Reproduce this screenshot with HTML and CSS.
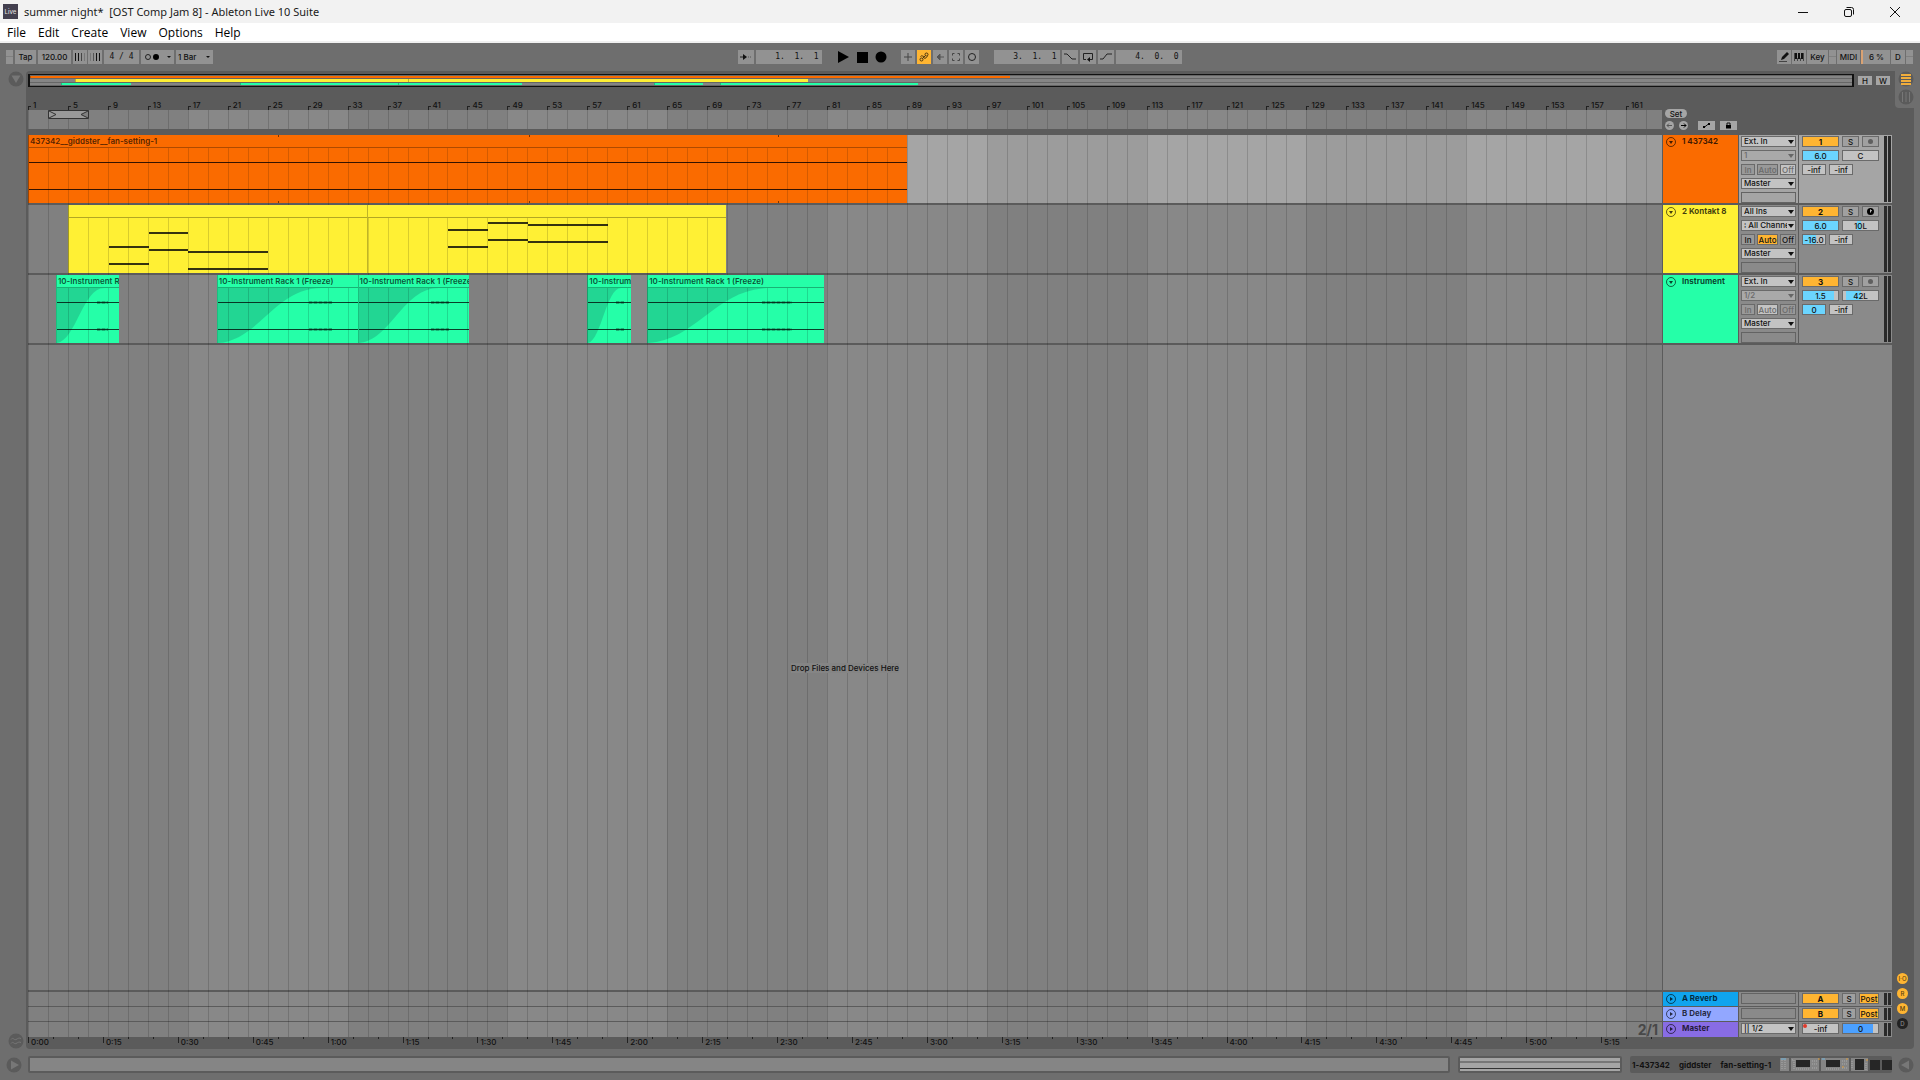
FILE: index.html
```html
<!DOCTYPE html>
<html lang="en">
<head>
    <meta charset="utf-8">
    <meta name="viewport" content="width=device-width, initial-scale=1.0">
    <title>summer night* [OST Comp Jam 8] - Ableton Live 10 Suite</title>
    <link rel="stylesheet" href="styles.css">
</head>
<body>
    <header class="titlebar">
        <span class="app-icon">Live</span>
        <h1 class="app-title">summer night*  [OST Comp Jam 8] - Ableton Live 10 Suite</h1>
        <div class="window-buttons">
            <button aria-label="Minimize"><svg width="12" height="12" viewBox="0 0 12 12"><path d="M1 6.5h10"/></svg></button>
            <button aria-label="Restore"><svg width="12" height="12" viewBox="0 0 12 12"><rect x="1.5" y="3.5" width="7" height="7" rx="1.5"/><path d="M3.5 1.5h5a2 2 0 0 1 2 2v5"/></svg></button>
            <button aria-label="Close"><svg width="12" height="12" viewBox="0 0 12 12"><path d="M1 1l10 10M11 1L1 11"/></svg></button>
        </div>
    </header>
    <nav class="menubar">
        <a href="#">File</a>
        <a href="#">Edit</a>
        <a href="#">Create</a>
        <a href="#">View</a>
        <a href="#">Options</a>
        <a href="#">Help</a>
    </nav>

    <div class="toolbar">
        <div class="tools">
            <button class="tool grip" aria-label="Show link"></button>
            <button class="tool w21">Tap</button>
            <button class="tool w33">120.00</button>
            <div class="tool-pair">
                <button class="tool w14" aria-label="Nudge down"><svg width="10" height="8" viewBox="0 0 10 8"><path d="M.5 0v8M3.5 0v8" stroke="#111"/><path d="M6.5 0v8" stroke="#444"/><path d="M9.5 0v8" stroke="#777"/></svg></button>
                <button class="tool w14" aria-label="Nudge up"><svg width="10" height="8" viewBox="0 0 10 8"><path d="M.5 0v8" stroke="#777"/><path d="M3.5 0v8" stroke="#555"/><path d="M6.5 0v8M9.5 0v8" stroke="#111"/></svg></button>
            </div>
            <button class="tool w35 mono">4 / 4</button>
            <button class="tool w33" aria-label="Metronome"><svg width="28" height="8" viewBox="0 0 28 8"><circle cx="4" cy="4" r="2.5" fill="none" stroke="#222"/><circle cx="12" cy="4" r="3" fill="#000"/><path d="M23 3h4l-2 2z" fill="#111"/></svg></button>
            <div class="pick quant"><select aria-label="Quantization"><option>1 Bar</option></select></div>
        </div>
        <div class="tools center">
            <button class="tool w16" aria-label="Follow"><svg width="14" height="8" viewBox="0 0 14 8"><path d="M1 4h3" stroke="#222"/><path d="M4 1l4 3-4 3z" fill="#111"/><path d="M9 4h4" stroke="#555" stroke-dasharray="1 1"/></svg></button>
            <button class="tool w66 mono position">1. &nbsp;1. &nbsp;1</button>
            <div class="transport">
                <button aria-label="Play"><svg width="12" height="12" viewBox="0 0 12 12"><path d="M1 0l11 6-11 6z"/></svg></button>
                <button aria-label="Stop"><svg width="12" height="12" viewBox="0 0 12 12"><path d="M1 1h11v11H1z"/></svg></button>
                <button aria-label="Record"><svg width="12" height="12" viewBox="0 0 12 12"><circle cx="6" cy="6" r="5.5"/></svg></button>
            </div>
            <button class="tool w14" aria-label="Overdub"><svg width="10" height="10" viewBox="0 0 10 10"><path d="M5 1v8M1 5h8" stroke="#444"/></svg></button>
            <button class="tool w14 on" aria-label="Automation arm"><svg width="10" height="10" viewBox="0 0 10 10"><g fill="none" stroke="#4a3310"><circle cx="2.5" cy="7.5" r="1.5"/><circle cx="7.5" cy="2.5" r="1.5"/><path d="M1.500 4.500c1-1.500 2.500 0 3.500 0M5 6c2 1 2-1 3.500-1.500M3.500 6.500l3-3"/></g></svg></button>
            <button class="tool w14" aria-label="Re-enable automation"><svg width="10" height="10" viewBox="0 0 10 10"><path d="M2 5h7M5 2L2 5l3 3z" stroke="#555" fill="#555"/></svg></button>
            <button class="tool w14" aria-label="Capture"><svg width="10" height="10" viewBox="0 0 10 10"><path d="M1.5 3.5v-2h2M6.5 1.5h2v2M8.5 6.5v2h-2M3.5 8.5h-2v-2" stroke="#444" fill="none"/></svg></button>
            <button class="tool w14" aria-label="Session record"><svg width="10" height="10" viewBox="0 0 10 10"><circle cx="5" cy="5" r="3.5" stroke="#222" fill="none"/></svg></button>
            <button class="tool w66 mono position loop-start">3. &nbsp;1. &nbsp;1</button>
            <button class="tool w16" aria-label="Punch in"><svg width="12" height="8" viewBox="0 0 12 8"><path d="M0 1h3l5 5h4" stroke="#222" fill="none"/></svg></button>
            <button class="tool w16" aria-label="Loop"><svg width="12" height="10" viewBox="0 0 12 10"><path d="M4 7.5H1.5v-6h9v6H8" stroke="#222" fill="none"/><path d="M8 5v5L5 7.5z" fill="#111"/></svg></button>
            <button class="tool w16" aria-label="Punch out"><svg width="12" height="8" viewBox="0 0 12 8"><path d="M0 6h3l4-5h5" stroke="#222" fill="none"/></svg></button>
            <button class="tool w66 mono position">4. &nbsp;0. &nbsp;0</button>
        </div>
        <div class="tools right">
            <button class="tool w14" aria-label="Draw mode"><svg width="10" height="10" viewBox="0 0 10 10"><path d="M2 8l1-3 5-5 2 2-5 5z" fill="#111"/><path d="M0 9.5h8" stroke="#444"/></svg></button>
            <button class="tool w14" aria-label="Computer keyboard"><svg width="10" height="10" viewBox="0 0 10 10"><path d="M1 1h2v6H1zM4 1h2v6H4zM7 1h2v6H7z" fill="#111"/><path d="M.5 1v8M3.5 6v3M6.5 6v3M9.500 1v8" stroke="#444"/></svg></button>
            <button class="tool w21">Key</button>
            <button class="tool grip" aria-label="Key activity"></button>
            <button class="tool w22">MIDI</button>
            <button class="tool w28 cpu">6 %</button>
            <button class="tool w14">D</button>
            <button class="tool grip" aria-label="Overload"></button>
        </div>
    </div>

    <div class="workspace">
        <div class="left-rail">
            <button class="round" aria-label="Show browser"><svg width="16" height="16" viewBox="0 0 16 16"><circle cx="8" cy="8" r="7.5"/><path d="M3.5 4.5h9L8 12z"/></svg></button>
            <button class="round" aria-label="Groove pool"><svg width="16" height="16" viewBox="0 0 16 16"><circle cx="8" cy="8" r="7.5"/><path class="wave" d="M3 6.5c2-3 3 1 5 0s3-2 5-1M3 10.5c2-3 3 1 5 0s3-2 5-1"/></svg></button>
        </div>

        <main class="panel">
            <div class="panel-main">
                <div class="overview-row">
                    <div class="overview" id="overview"></div>
                    <button class="mini">H</button>
                    <button class="mini">W</button>
                </div>

                <div class="ruler-row">
                    <div class="ruler">
                        <div class="bar-numbers" id="barNumbers"></div>
                        <div class="scrub">
                            <div class="grid-lines"></div>
                            <svg class="loop-brace" id="loopBrace" width="41" height="9" viewBox="0 0 41 9"><path d="M.5.5h40v8H.5zM1 1l7 3.5L1 8M40 1l-7 3.5L40 8"/></svg>
                        </div>
                    </div>
                    <div class="locators">
                        <button class="set">Set</button>
                        <div class="locator-buttons">
                            <button class="dot" aria-label="Previous locator"><svg width="9" height="9" viewBox="0 0 9 9"><path d="M2 4.5h5M4 2.5l-2 2 2 2" stroke="#555" fill="none"/></svg></button>
                            <button class="dot" aria-label="Next locator"><svg width="9" height="9" viewBox="0 0 9 9"><path d="M2 4.5h5M5 2.5l2 2-2 2" stroke="#000" fill="none"/></svg></button>
                            <button class="flat" aria-label="Automation mode"><svg width="9" height="7" viewBox="0 0 9 7"><path d="M2 5.5l5-4" stroke="#111"/><path d="M1 4h2v2H1zM6 1h2v2H6z"/></svg></button>
                            <button class="flat" aria-label="Lock envelopes"><svg width="7" height="7" viewBox="0 0 7 7"><path d="M1 3h5v3.5H1z"/><path d="M2 3V1h3v2" stroke="#111" fill="none"/></svg></button>
                        </div>
                    </div>
                </div>

                <div class="arrangement">
                    <div class="timeline">
                        <div class="grid-lines"></div>
                        <div class="lane selected" id="lane1"></div>
                        <div class="lane" id="lane2"></div>
                        <div class="lane" id="lane3"></div>
                        <div class="drop-area"><span class="drop-text">Drop Files and Devices Here</span></div>
                        <div class="return-lane"></div>
                        <div class="return-lane"></div>
                        <div class="return-lane last"><span class="zoom-ratio">2/1</span></div>
                    </div>

                    <div class="headers">
                        <section class="track selected">
                            <div class="track-name orange"><button class="fold" aria-label="Fold track"></button><h2>1 437342</h2></div>
                            <div class="io">
                                <div class="pick"><select aria-label="Input type"><option>Ext. In</option></select></div>
                                <div class="pick dim"><select aria-label="Input channel"><option>1</option></select></div>
                                <div class="monitor dim"><button>In</button><button>Auto</button><button class="lit">Off</button></div>
                                <div class="pick"><select aria-label="Output"><option>Master</option></select></div>
                                <div class="empty-box"></div>
                            </div>
                            <div class="mixer">
                                <div class="mix-row"><button class="num">1</button><button class="sq">S</button><button class="sq" aria-label="Arm"><i class="rec"></i></button></div>
                                <div class="mix-row"><button class="val" style="--to:100%">6.0</button><button class="val">C</button></div>
                                <div class="mix-row"><button class="val send">-inf</button><button class="val send">-inf</button></div>
                            </div>
                            <div class="meter"></div>
                        </section>
                        <section class="track">
                            <div class="track-name yellow"><button class="fold" aria-label="Fold track"></button><h2>2 Kontakt 8</h2></div>
                            <div class="io">
                                <div class="pick"><select aria-label="Input type"><option>All Ins</option></select></div>
                                <div class="pick"><select aria-label="Input channel"><option>⁞ All Channels</option></select></div>
                                <div class="monitor"><button>In</button><button class="on">Auto</button><button>Off</button></div>
                                <div class="pick"><select aria-label="Output"><option>Master</option></select></div>
                                <div class="empty-box"></div>
                            </div>
                            <div class="mixer">
                                <div class="mix-row"><button class="num">2</button><button class="sq">S</button><button class="sq" aria-label="Arm"><svg width="7" height="7" viewBox="0 0 7 7"><circle cx="3.5" cy="3.5" r="3.500"/><path d="M3.500 1.5v3M3.500 2l1.500 1" stroke="#bbb" fill="none"/></svg></button></div>
                                <div class="mix-row"><button class="val" style="--to:100%">6.0</button><button class="val" style="--from:40%;--to:50%">10L</button></div>
                                <div class="mix-row"><button class="val send" style="--to:60%">-16.0</button><button class="val send">-inf</button></div>
                            </div>
                            <div class="meter"></div>
                        </section>
                        <section class="track">
                            <div class="track-name green"><button class="fold" aria-label="Fold track"></button><h2>Instrument</h2></div>
                            <div class="io">
                                <div class="pick"><select aria-label="Input type"><option>Ext. In</option></select></div>
                                <div class="pick dim"><select aria-label="Input channel"><option>1/2</option></select></div>
                                <div class="monitor dim"><button>In</button><button class="lit">Auto</button><button>Off</button></div>
                                <div class="pick"><select aria-label="Output"><option>Master</option></select></div>
                                <div class="empty-box"></div>
                            </div>
                            <div class="mixer">
                                <div class="mix-row"><button class="num">3</button><button class="sq">S</button><button class="sq" aria-label="Arm"><i class="rec"></i></button></div>
                                <div class="mix-row"><button class="val" style="--to:88%">1.5</button><button class="val" style="--from:8%;--to:50%">42L</button></div>
                                <div class="mix-row"><button class="val send" style="--to:100%">0</button><button class="val send">-inf</button></div>
                            </div>
                            <div class="meter"></div>
                        </section>
                        <div class="header-space"></div>
                        <section class="track return">
                            <div class="track-name blue"><button class="fold closed" aria-label="Unfold track"></button><h2>A Reverb</h2></div>
                            <div class="io"><div class="empty-box"></div></div>
                            <div class="mixer"><div class="mix-row"><button class="num">A</button><button class="sq small">S</button><button class="post">Post</button></div></div>
                            <div class="meter"></div>
                        </section>
                        <section class="track return">
                            <div class="track-name lilac"><button class="fold closed" aria-label="Unfold track"></button><h2>B Delay</h2></div>
                            <div class="io"><div class="empty-box"></div></div>
                            <div class="mixer"><div class="mix-row"><button class="num">B</button><button class="sq small">S</button><button class="post">Post</button></div></div>
                            <div class="meter"></div>
                        </section>
                        <section class="track return last">
                            <div class="track-name purple"><button class="fold closed" aria-label="Unfold track"></button><h2>Master</h2></div>
                            <div class="io"><div class="pick"><select aria-label="Master output"><option>|| 1/2</option></select></div></div>
                            <div class="mixer"><div class="mix-row"><button class="val peak">-inf</button><button class="val master" style="--to:85%">0</button></div></div>
                            <div class="meter"></div>
                        </section>
                    </div>
                </div>
                <div class="time-ruler" id="timeRuler"></div>
            </div>

            <div class="right-rail">
                <div class="view-tabs">
                    <button class="round" aria-label="Arrangement view"><svg width="16" height="16" viewBox="0 0 16 16"><circle cx="8" cy="8" r="7.5"/><path class="amber" d="M3 4h10M3 7h10M3 10h10M3 13h10"/></svg></button>
                    <button class="round" aria-label="Session view"><svg width="16" height="16" viewBox="0 0 16 16"><circle cx="8" cy="8" r="7.5"/><path class="wave" d="M4.5 3v10M8 3v10M11.5 3v10"/></svg></button>
                </div>
                <div class="section-toggles">
                    <button>I·O</button>
                    <button>R</button>
                    <button>M</button>
                    <button class="off">D</button>
                </div>
            </div>
        </main>
    </div>

    <footer class="statusbar">
        <button class="round" aria-label="Show info"><svg width="16" height="16" viewBox="0 0 16 16"><circle cx="8" cy="8" r="7.5"/><path d="M5 3.5v9L13 8z"/></svg></button>
        <div class="info-box"></div>
        <div class="clip-overview"></div>
        <div class="device-box">
            <span>1-437342</span><span>giddster</span><span>fan-setting-1</span>
            <svg class="devices" width="112" height="13" viewBox="0 0 112 13">
                <path d="M0 0h9v13H0zM11 0h28v13H11zM41 0h28v13H41zM71 0h17v13H71z" fill="#858585"/>
                <path d="M16 2h14v7H16zM46 2h14v7H46zM75 1h9v11h-9zM90 2h10v10H90zM102 2h10v10h-10z" fill="#262626"/>
                <path d="M2 2v9M5 2v9M12 2h2v9M32 3h6M32 6h6M32 10h6M62 3h6M62 6h6M62 10h6M16 11h14M46 11h14M86 5v7M72 3v8" stroke="#aaa" stroke-dasharray="1 1" fill="none"/>
                <path d="M1 1h5M42 1h3" stroke="#73b7df"/><path d="M38 1h2M66 1h2M86 2h2M62 9h2" stroke="#d99b3c"/>
            </svg>
        </div>
        <button class="round" aria-label="Show detail view"><svg width="16" height="16" viewBox="0 0 16 16"><circle cx="8" cy="8" r="7.5"/><path d="M11 3.5v9L3 8z"/></svg></button>
    </footer>

    <script src="arrangement.js"></script>
</body>
</html>
```
FILE: arrangement.js
```js
const BARS = 163.6;
const freeze = '10-Instrument Rack 1 (Freeze)';

const tracks = {
    lane1: [
        { color: 'orange', start: 1, end: 89, name: '437342__giddster__fan-setting-1', audio: true, repeats: [26, 51.1, 76.1] }
    ],
    lane2: [
        { color: 'yellow', start: 5, end: 34.9, name: '', notes: [[9, 13, 41], [9, 13, 58], [13, 17, 27], [13, 17, 44], [17, 25, 46], [17, 25, 63]] },
        { color: 'yellow', start: 34.9, end: 70.9, name: '', notes: [[43, 47, 24], [43, 47, 41], [47, 51, 17], [47, 51, 34], [51, 59, 19], [51, 59, 36]] }
    ],
    lane3: [
        { color: 'green', start: 3.8, end: 10.1, name: freeze, audio: true, fade: 76 },
        { color: 'green', start: 19.9, end: 34, name: freeze, audio: true, fade: 74 },
        { color: 'green', start: 34, end: 45.2, name: freeze, audio: true, fade: 72 },
        { color: 'green', start: 57, end: 61.4, name: freeze, audio: true, fade: 77 },
        { color: 'green', start: 63, end: 80.7, name: freeze, audio: true, fade: 70 }
    ]
};

function add(parent, className, text) {
    const el = document.createElement('div');
    el.className = className;
    if (text) el.textContent = text;
    parent.appendChild(el);
    return el;
}

function place(el, start, end, from = 1, span = BARS) {
    el.style.left = (start - from) / span * 100 + '%';
    if (end) el.style.width = (end - start) / span * 100 + '%';
}

// grid lines every two bars
document.querySelectorAll('.grid-lines').forEach(grid => {
    for (let bar = 1; bar < BARS + 1; bar += 2) place(add(grid, 'line'), bar);
});

const numbers = document.getElementById('barNumbers');
for (let bar = 1; bar <= 161; bar += 4) place(add(numbers, 'bar-number', String(bar)), bar);

place(document.getElementById('loopBrace'), 3);

// 120 bpm: five seconds are two and a half bars
const times = document.getElementById('timeRuler');
for (let s = 0; s <= 325; s += 5) {
    const label = Math.floor(s / 60) + ':' + String(s % 60).padStart(2, '0');
    const major = s % 15 === 0;
    place(add(times, major ? 'time' : 'time minor', major ? label : ''), 1 + s / 2);
}

const overview = document.getElementById('overview');
Object.keys(tracks).forEach(id => {
    const lane = document.getElementById(id);
    const row = add(overview, 'overview-lane');
    tracks[id].forEach(data => {
        place(add(row, 'overview-clip ' + data.color), data.start, data.end);

        const clip = add(lane, 'clip ' + data.color);
        place(clip, data.start, data.end);
        add(clip, 'clip-name', data.name);
        const body = add(clip, 'clip-body');
        if (data.fade) {
            body.innerHTML = `<svg class="fade" viewBox="0 0 100 100" preserveAspectRatio="none"><path d="M0 0H${data.fade}C${data.fade * 0.55} 0 ${data.fade * 0.4} 95 0 100z"/></svg>`;
        }
        if (data.audio) {
            add(body, 'wave-line upper');
            add(body, 'wave-line lower');
        }
        (data.repeats || []).forEach(bar => {
            place(add(clip, 'repeat'), bar, 0, data.start, data.end - data.start);
        });
        (data.notes || []).forEach(note => {
            const el = add(clip, 'note');
            place(el, note[0], note[1], data.start, data.end - data.start);
            el.style.top = note[2] + 'px';
        });
    });
});
```
FILE: styles.css
```css
* {
    box-sizing: border-box;
}

body {
    margin: 0;
    min-height: 100vh;
    display: flex;
    flex-direction: column;
    background: #6e6e6e;
    font-family: Inter, "Liberation Sans", sans-serif;
    font-size: 8px;
    font-weight: 500;
    line-height: 10px;
    color: #111;
}

button, select {
    margin: 0;
    padding: 0;
    border: none;
    border-radius: 0;
    background: none;
    font: inherit;
    color: inherit;
}

button {
    display: flex;
    align-items: center;
    justify-content: center;
    flex: none;
    white-space: nowrap;
}

select {
    appearance: none;
    width: 100%;
    height: 100%;
    padding: 0 8px 0 2px;
}

h1, h2 {
    margin: 0;
    font-weight: 400;
}

svg {
    display: block;
    flex: none;
}

/* window chrome */
.titlebar {
    display: flex;
    align-items: center;
    height: 23px;
    padding-left: 3px;
    background: #f2f2f2;
}

.app-icon {
    width: 15px;
    height: 15px;
    margin-right: 6px;
    background: #43404f;
    color: #ddd;
    font-size: 6px;
    line-height: 15px;
    text-align: center;
}

.app-title {
    font-family: "Noto Sans", "Open Sans", sans-serif;
    font-size: 11px;
    line-height: 16px;
    white-space: pre;
    color: #1a1a1a;
}

.window-buttons {
    display: flex;
    margin-left: auto;
    padding-right: 2px;
}

.window-buttons button {
    width: 46px;
    height: 22px;
}

.window-buttons svg {
    fill: none;
    stroke: #111;
}

.menubar {
    display: flex;
    gap: 12px;
    height: 20px;
    padding-left: 7px;
    background: #fff;
    border-bottom: 2px solid #f0f0f0;
    font-family: "Open Sans", "Noto Sans", sans-serif;
    font-size: 12px;
    font-weight: 400;
    line-height: 19px;
}

.menubar a {
    color: #000;
    text-decoration: none;
}

/* control bar */
.toolbar {
    display: grid;
    grid-template-columns: 1fr auto 1fr;
    align-items: center;
    height: 28px;
    padding: 0 7px 0 6px;
}

.tools {
    display: flex;
    gap: 2px;
}

.tools.right {
    justify-content: flex-end;
    gap: 1px;
}

.tool-pair {
    display: flex;
    gap: 1px;
}

.tool {
    height: 14px;
    background: #929292;
}

.mono {
    font-family: "DejaVu Sans Mono", monospace;
}

.grip {
    width: 7px;
    background: linear-gradient(#929292 6px, #808080 6px 7px, #929292 7px);
}

.w14 { width: 14px; }
.w16 { width: 16px; }
.w21 { width: 21px; }
.w22 { width: 23px; }
.w28 { width: 29px; }
.w33 { width: 33px; }
.w35 { width: 35px; }
.w66 { width: 66px; }

.position {
    justify-content: flex-end;
    padding-right: 3px;
}

.tool.on {
    background: #ffb532;
}

.cpu {
    border-left: 2px solid #d9a273;
}

.transport {
    display: flex;
    gap: 7px;
    margin: 0 12px 0 13px;
}

.transport button {
    height: 14px;
}

.loop-start {
    margin-left: 13px;
}

/* drop-downs */
.pick {
    position: relative;
    height: 11px;
    background: #c3c3c3;
    border: 1px solid #6a6a6a;
}

.pick::after {
    content: "";
    position: absolute;
    right: 1px;
    top: 3px;
    border: 3px solid transparent;
    border-top: 4px solid #111;
    border-bottom: none;
    pointer-events: none;
}

.pick select {
    display: block;
    line-height: 9px;
}

.quant {
    width: 37px;
    height: 14px;
    background: #929292;
    border: none;
}

.quant::after {
    right: 3px;
    top: 6px;
    border-width: 2px;
}

/* workspace */
.workspace {
    display: flex;
    flex: 1;
    padding-right: 6px;
}

.left-rail {
    display: flex;
    flex-direction: column;
    justify-content: space-between;
    width: 26px;
    padding-left: 6px;
}

.round svg {
    fill: #5b5b5b;
}

.round path {
    fill: #777;
}

.round .wave {
    fill: none;
    stroke: #777;
}

.round .amber {
    fill: none;
    stroke: #f0ad3c;
    stroke-width: 2px;
}

.panel {
    display: flex;
    flex: 1;
    min-width: 0;
    background: #5b5b5b;
    border-radius: 4px;
}

.panel-main {
    display: flex;
    flex-direction: column;
    flex: 1;
    min-width: 0;
    padding-left: 2px;
}

.overview-row {
    display: flex;
    align-items: center;
    gap: 4px;
    height: 29px;
    padding: 0 2px 10px 0;
}

.overview {
    display: flex;
    flex-direction: column;
    gap: 1px;
    flex: 1;
    height: 13px;
    padding: 1px 0;
    border: 1px solid #111;
    border-width: 1px 2px;
    background: #666;
}

.overview-lane {
    position: relative;
    flex: 1;
    background: #858585;
}

.overview-clip {
    position: absolute;
    top: 0;
    bottom: 0;
    border-left: 1px solid rgba(0, 0, 0, 0.25);
}

.mini {
    width: 14px;
    height: 9px;
    background: #a5a5a5;
}

.ruler-row {
    display: flex;
    height: 35px;
}

.ruler {
    flex: 1;
}

.bar-numbers {
    position: relative;
    height: 10px;
}

.bar-number {
    position: absolute;
    height: 10px;
    padding-left: 5px;
}

.bar-number::before {
    content: "";
    position: absolute;
    left: 0;
    top: 6px;
    width: 2px;
    height: 4px;
    border: 1px solid #222;
    border-width: 1px 0 0 1px;
}

.scrub, .timeline {
    position: relative;
    background: repeating-linear-gradient(to right, #808080 0 9.78%, #888 9.78% 19.56%);
}

.scrub {
    height: 19px;
}

.grid-lines {
    position: absolute;
    inset: 0;
    z-index: 1;
    overflow: hidden;
    pointer-events: none;
}

.line {
    position: absolute;
    top: 0;
    bottom: 0;
    width: 1px;
    background: rgba(0, 0, 0, 0.15);
}

.loop-brace {
    position: absolute;
    top: 0;
    z-index: 2;
    fill: #999;
    stroke: #333;
}

.locators {
    width: 230px;
    padding: 9px 0 0 3px;
}

.set {
    width: 22px;
    height: 9px;
    border-radius: 5px;
    background: #a5a5a5;
}

.locator-buttons {
    display: flex;
    align-items: center;
    gap: 5px;
    margin-top: 3px;
}

.dot {
    width: 9px;
    height: 9px;
    border-radius: 50%;
    background: #a5a5a5;
}

.flat {
    width: 17px;
    height: 9px;
    margin-left: 5px;
    background: #a5a5a5;
}

.flat + .flat {
    margin-left: 0;
}

/* arrangement */
.arrangement {
    display: flex;
    flex: 1;
}

.timeline {
    display: flex;
    flex-direction: column;
    flex: 1;
    min-width: 0;
}

.lane {
    position: relative;
    height: 70px;
    border-bottom: 2px solid #5b5b5b;
}

.lane.selected {
    background: repeating-linear-gradient(to right, #9c9c9c 0 9.78%, #a5a5a5 9.78% 19.56%);
}

.clip {
    position: absolute;
    top: 0;
    bottom: 0;
    overflow: hidden;
    border-left: 1px solid rgba(0, 0, 0, 0.25);
}

.orange { background: #fa6b00; }
.yellow { background: #fff034; }
.green { background: #25ffa8; }
.blue { background: #10a4ee; }
.lilac { background: #92a7ff; }
.purple { background: #886ce4; }

.clip-name {
    position: relative;
    z-index: 2;
    height: 13px;
    padding-left: 1px;
    overflow: hidden;
    background: inherit;
    border-bottom: 1px solid rgba(0, 0, 0, 0.3);
    font-weight: 600;
    line-height: 13px;
    white-space: nowrap;
    color: rgba(0, 0, 0, 0.7);
}

.clip-body {
    position: relative;
    height: 55px;
}

.fade {
    position: absolute;
    width: 100%;
    height: 100%;
    fill: rgba(30, 120, 100, 0.3);
}

.wave-line {
    position: absolute;
    left: 0;
    right: 0;
    height: 1px;
    background: rgba(0, 0, 0, 0.75);
}

.wave-line.upper { top: 14px; }
.wave-line.lower { top: 41px; }

.green .wave-line::after {
    content: "";
    position: absolute;
    left: 65%;
    width: 17%;
    top: -1px;
    height: 3px;
    background: repeating-linear-gradient(to right, rgba(0, 0, 0, 0.3) 0 3px, rgba(0, 0, 0, 0.15) 3px 5px);
}

.orange .wave-line {
    background: rgba(30, 10, 0, 0.9);
}

.note {
    position: absolute;
    height: 2px;
    background: #35320f;
}

.repeat {
    position: absolute;
    z-index: 3;
    top: 0;
    bottom: 0;
    width: 1px;
    background: linear-gradient(#7a3500 2px, transparent 2px 66px, #7a3500 66px);
}

.drop-area {
    display: flex;
    align-items: center;
    justify-content: center;
    flex: 1;
    border-bottom: 2px solid #5b5b5b;
}

.drop-text {
    position: relative;
    z-index: 2;
    background: #858585;
}

.return-lane {
    height: 15px;
    border-bottom: 1px solid #5b5b5b;
}

.return-lane.last {
    display: flex;
    justify-content: flex-end;
    border: none;
}

.zoom-ratio {
    padding-right: 4px;
    font-size: 14px;
    font-weight: 700;
    line-height: 15px;
    color: #484848;
}

/* track headers */
.headers {
    display: flex;
    flex-direction: column;
    width: 230px;
    padding-left: 1px;
}

.track {
    display: flex;
    height: 70px;
    background: #8a8a8a;
    border-bottom: 2px solid #5b5b5b;
}

.track.selected {
    background: #a5a5a5;
}

.track-name {
    display: flex;
    gap: 6px;
    width: 75px;
    padding: 2px 0 0 3px;
}

.track-name h2 {
    font-size: 8px;
    font-weight: 700;
    line-height: 9px;
    white-space: nowrap;
    color: rgba(0, 0, 0, 0.75);
}

.fold {
    width: 10px;
    height: 10px;
    border: 1px solid rgba(0, 0, 0, 0.6);
    border-radius: 50%;
}

.fold::before {
    content: "";
    border: 2px solid transparent;
    border-top: 3px solid rgba(0, 0, 0, 0.75);
    border-bottom: none;
}

.fold.closed::before {
    border: 2px solid transparent;
    border-left: 3px solid rgba(0, 0, 0, 0.75);
    border-right: none;
}

.io {
    display: flex;
    flex-direction: column;
    gap: 3px;
    width: 61px;
    padding: 1px 2px 0;
    border: 1px solid #5b5b5b;
    border-width: 0 1px;
}

.dim {
    color: #6a6a6a;
}

.pick.dim {
    background: #a9a9a9;
}

.pick.dim::after {
    border-top-color: #666;
}

.monitor {
    display: flex;
    justify-content: space-between;
    height: 11px;
}

.monitor button {
    width: 14px;
    border: 1px solid #6a6a6a;
    background: #999;
}

.monitor button:nth-child(2) { width: 21px; }
.monitor button:nth-child(3) { width: 16px; }
.monitor .lit { background: #c3c3c3; }
.monitor .on { background: #ffb532; }

.empty-box {
    height: 11px;
    border: 1px solid #636363;
}

.mixer {
    display: flex;
    flex-direction: column;
    gap: 3px;
    flex: 1;
    padding: 1px 0 0 3px;
}

.mix-row {
    display: flex;
    gap: 3px;
}

.mix-row button {
    height: 11px;
    border: 1px solid #6a6a6a;
}

.num {
    width: 37px;
    background: #ffb532;
    font-weight: 700;
}

.sq {
    width: 17px;
    background: #a0a0a0;
}

.sq.small {
    width: 14px;
}

.post {
    width: 20px;
    background: #ffb532;
}

.rec {
    width: 5px;
    height: 5px;
    border-radius: 50%;
    background: #5f5f5f;
}

.val {
    --from: 0%;
    --to: 0%;
    --fill: #6bd5ff;
    width: 37px;
    background: linear-gradient(to right, #c3c3c3 var(--from), var(--fill) var(--from) var(--to), #c3c3c3 var(--to));
}

.send {
    width: 24px;
}

.master {
    --fill: #4ba0ff;
}

.peak {
    position: relative;
}

.peak::before {
    content: "";
    position: absolute;
    left: 0;
    top: 0;
    width: 4px;
    height: 4px;
    border-radius: 50%;
    background: #e0392b;
}

.meter {
    width: 7px;
    margin: 1px 1px 1px 0;
    background: linear-gradient(to right, #2a2a2a 3px, transparent 3px 4px, #2a2a2a 4px);
}

.header-space {
    flex: 1;
    background: #858585;
    border-bottom: 2px solid #5b5b5b;
}

.track.return {
    height: 15px;
    border-bottom-width: 1px;
}

.track.return.last {
    border: none;
}

.time-ruler {
    position: relative;
    height: 12px;
    margin-right: 230px;
}

.time {
    position: absolute;
    height: 6px;
    padding-left: 2px;
    border-left: 1px solid #222;
}

.time.minor {
    height: 2px;
    padding: 0;
}

/* right rail */
.right-rail {
    display: flex;
    flex-direction: column;
    justify-content: space-between;
    width: 22px;
}

.view-tabs {
    display: flex;
    flex-direction: column;
    gap: 2px;
    width: 19px;
    height: 37px;
    margin-left: auto;
    padding-left: 3px;
    background: #6e6e6e;
    border-bottom-left-radius: 4px;
}

.section-toggles {
    display: flex;
    flex-direction: column;
    gap: 4px;
    padding: 0 0 20px 5px;
}

.section-toggles button {
    width: 11px;
    height: 11px;
    border-radius: 50%;
    background: #ffb532;
    font-size: 6px;
    color: #5c430f;
}

.section-toggles .off {
    background: #222;
    color: #888;
}

/* status bar */
.statusbar {
    display: flex;
    align-items: center;
    height: 31px;
    padding: 0 6px;
}

.info-box, .clip-overview, .device-box {
    height: 17px;
    border: 2px solid #5b5b5b;
    border-radius: 2px;
}

.info-box {
    flex: 1;
    margin: 0 8px 0 6px;
    background: #858585;
}

.clip-overview {
    width: 164px;
    margin-right: 8px;
    background: linear-gradient(#a5a5a5 3px, #777 3px 5px, #a5a5a5 5px 10px, #333 10px 11px, #a5a5a5 11px);
}

.device-box {
    display: flex;
    align-items: center;
    gap: 9px;
    width: 262px;
    margin-right: 6px;
    background: #5b5b5b;
    font-weight: 700;
    white-space: nowrap;
}

.devices {
    margin-left: auto;
}
```
